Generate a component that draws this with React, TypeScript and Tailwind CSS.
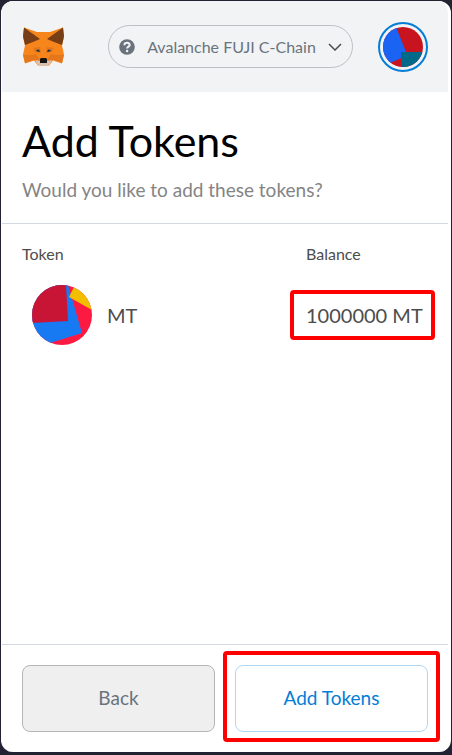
import React from 'react';

function FoxLogo() {
  return (
    <svg viewBox="0 0 41 39" className="h-[39px] w-[41px]" role="img" aria-label="MetaMask">
      <path d="M1 0.500 14 5h13L40 0.500l1 10-2 8 2 9-2 9-9-3-4 5H15l-4-5-9 3-2-9 2-9-2-8z" fill="#f6851b" />
      <path d="M1 0.500 17 12 10 15 2 18 0 9zM40 0.500 24 12l7 3 8 3 2-9z" fill="#763d16" />
      <path d="M0 28h12l1 4-11 4zM41 28H29l-1 4 11 4z" fill="#e4761b" />
      <path d="M10 21 17 20l1 6-6-1zM31 21l-7-1-1 6 6-1z" fill="#e4761b" />
      <path d="m9 28 4-1 4 6-4 1zM32 28l-4-1-4 6 4 1z" fill="#e4761b" />
      <path d="m13 23 3-.5 1 2.500-3-.5zM28 23l-3-.5-1 2.500 3-.5z" fill="#233447" />
      <path d="m12 33 5 1h7l5-1-2 4-4 2h-5l-4-2z" fill="#d7c1b3" />
      <path d="M18 31h5l1 1v4h-7v-4z" fill="#161616" />
    </svg>
  );
}

function AccountIcon() {
  return (
    <svg viewBox="0 0 40 40" className="size-10 rounded-full" aria-hidden="true">
      <path d="M0 0h40v40H0z" fill="#c8141e" />
      <path d="M0 0h13l10 25v4L7 36 0 40z" fill="#1b63f2" />
      <path d="M18 25h22v15H18z" fill="#016a8b" />
    </svg>
  );
}

function TokenIcon() {
  return (
    <svg viewBox="0 0 60 60" className="size-[60px] rounded-full" aria-hidden="true">
      <path d="M0 0h60v60H0z" fill="#fc1a42" />
      <path d="M0 0h36l14 48-32 10L0 60z" fill="#187af2" />
      <path d="M0 0h34l2 36L0 38z" fill="#c81435" />
      <path d="M43 0h17v25L37 12z" fill="#f3be00" />
    </svg>
  );
}

export default function App() {
  return (
    <div className="flex min-h-screen bg-[#222233] px-px pt-px pb-[3px] font-['Lato','Liberation_Sans',sans-serif] text-[#4d4d4d]">
      <main className="flex flex-1 flex-col overflow-hidden rounded-xl border-r-[3px] border-l border-white bg-white">
        <header className="flex h-[91px] shrink-0 items-center justify-between bg-[#f2f3f4] pr-5 pl-[21px]">
          <FoxLogo />
          <div className="flex items-center gap-[25px]">
            <button type="button" className="flex h-[43px] w-[245px] items-center rounded-full border border-[#bbc0c5] px-2.5 text-base text-[#6a737d]">
              <svg viewBox="0 0 16 16" className="size-4 shrink-0" aria-hidden="true">
                <circle cx="8" cy="8" r="7.800" fill="#6a737d" />
                <path d="M5.300 6.200C5.500 2.900 10.900 3.100 10.700 6.100 10.600 7.600 8.100 7.600 8.100 9.400" fill="none" stroke="#f2f3f4" strokeWidth="2" />
                <circle cx="8.100" cy="12" r="1.200" fill="#f2f3f4" />
              </svg>
              <span className="flex-1 text-center whitespace-nowrap">Avalanche FUJI C-Chain</span>
              <svg viewBox="0 0 14 8" className="h-2 w-3.5 shrink-0" aria-hidden="true">
                <path d="m1 1 6 6 6-6" fill="none" stroke="#4d4d4d" strokeWidth="1.500" />
              </svg>
            </button>
            <button type="button" aria-label="Account" className="flex size-[50px] items-center justify-center rounded-full border-2 border-[#037dd6] bg-[#f2f3f4]">
              <AccountIcon />
            </button>
          </div>
        </header>

        <section className="border-b border-[#d2d8dd] px-5 pt-6 pb-[21px]">
          <h1 className="text-[43px] leading-[50px] text-black">Add Tokens</h1>
          <p className="mt-3 text-[19px] leading-6 text-[#848484]">Would you like to add these tokens?</p>
        </section>

        <section className="flex-1 px-5 pt-5">
          <table className="w-full table-fixed text-left">
            <thead>
              <tr className="text-base leading-5">
                <th className="font-normal">Token</th>
                <th className="w-[122px] font-normal">Balance</th>
              </tr>
            </thead>
            <tbody className="text-xl">
              <tr>
                <td className="pt-[21px] pl-2.5">
                  <div className="flex items-center gap-[15px]">
                    <TokenIcon />
                    <span>MT</span>
                  </div>
                </td>
                <td className="pt-[21px]">
                  <span className="relative whitespace-nowrap">
                    1000000 MT
                    <span className="pointer-events-none absolute -inset-y-[13px] -right-3 -left-4 rounded-sm border-4 border-[#ff0000]" />
                  </span>
                </td>
              </tr>
            </tbody>
          </table>
        </section>

        <footer className="grid grid-cols-2 gap-5 border-t border-[#d2d8dd] p-5 text-[19px]">
          <button type="button" className="h-[67px] rounded-lg border border-[#b5b5b5] bg-[#efefef] text-[#6a737d]">Back</button>
          <div className="relative">
            <button type="button" className="h-[67px] w-full rounded-lg border border-[#b0d7f1] bg-white text-[#037dd6]">Add Tokens</button>
            <span className="pointer-events-none absolute -inset-x-3 -top-3.5 -bottom-2.5 rounded-sm border-4 border-[#ff0000]" />
          </div>
        </footer>
      </main>
    </div>
  );
}
